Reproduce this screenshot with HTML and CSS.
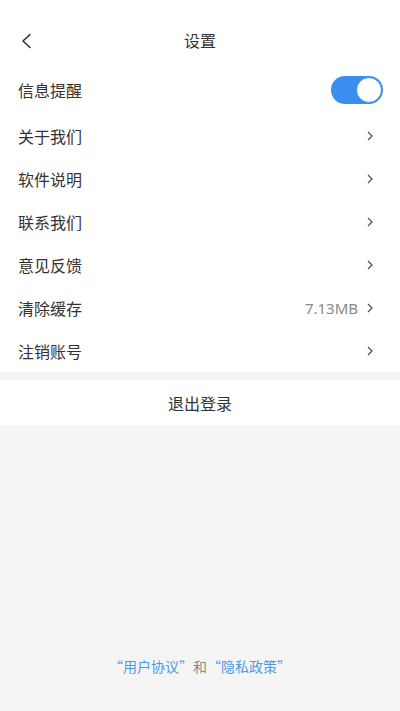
FILE: index.html
```html
<!DOCTYPE html>
<html lang="zh-CN">
<head>
<meta charset="utf-8">
<title>设置</title>
<link rel="stylesheet" href="styles.css">
</head>
<body>
<div class="page">
  <header class="header">
    <svg class="back" width="12" height="16" viewBox="0 0 12 16"><path d="M10 1.5 L3 8 L10 14.5" fill="none" stroke="#333" stroke-width="1.6" stroke-linecap="round" stroke-linejoin="round"/></svg>
    <div class="title">设置</div>
  </header>
  <div class="list">
    <div class="row row-first">
      <span class="label">信息提醒</span>
      <span class="toggle"><span class="knob"></span></span>
    </div>
    <div class="row"><span class="label">关于我们</span><svg class="chev" width="8" height="10" viewBox="0 0 8 10"><path d="M2 1 L6 5 L2 9" fill="none" stroke="#555" stroke-width="1.3"/></svg></div>
    <div class="row"><span class="label">软件说明</span><svg class="chev" width="8" height="10" viewBox="0 0 8 10"><path d="M2 1 L6 5 L2 9" fill="none" stroke="#555" stroke-width="1.3"/></svg></div>
    <div class="row"><span class="label">联系我们</span><svg class="chev" width="8" height="10" viewBox="0 0 8 10"><path d="M2 1 L6 5 L2 9" fill="none" stroke="#555" stroke-width="1.3"/></svg></div>
    <div class="row"><span class="label">意见反馈</span><svg class="chev" width="8" height="10" viewBox="0 0 8 10"><path d="M2 1 L6 5 L2 9" fill="none" stroke="#555" stroke-width="1.3"/></svg></div>
    <div class="row"><span class="label">清除缓存</span><span class="right"><span class="value">7.13MB</span><svg class="chev" width="8" height="10" viewBox="0 0 8 10"><path d="M2 1 L6 5 L2 9" fill="none" stroke="#555" stroke-width="1.3"/></svg></span></div>
    <div class="row"><span class="label">注销账号</span><svg class="chev" width="8" height="10" viewBox="0 0 8 10"><path d="M2 1 L6 5 L2 9" fill="none" stroke="#555" stroke-width="1.3"/></svg></div>
  </div>
  <div class="band"></div>
  <div class="logout">退出登录</div>
  <div class="rest">
    <div class="footer"><span class="link">“用户协议”</span><span class="and">和</span><span class="link">“隐私政策”</span></div>
  </div>
</div>
</body>
</html>
```
FILE: styles.css
```css
html, body {
  margin: 0;
  padding: 0;
  background: #f5f5f5;
}
body {
  font-family: "Noto Sans CJK SC", "Noto Sans", sans-serif;
  color: #333;
}
.page {
  width: 400px;
  height: 711px;
  display: flex;
  flex-direction: column;
  background: #f5f5f5;
}
.header {
  height: 66px;
  box-sizing: border-box;
  padding-top: 14px;
  display: flex;
  align-items: center;
  justify-content: center;
  position: relative;
  background: #fff;
}
.back {
  position: absolute;
  left: 20px;
  top: 33px;
}
.title {
  font-size: 16px;
  color: #333;
}
.list {
  background: #fff;
}
.row {
  height: 43px;
  display: flex;
  align-items: center;
  justify-content: space-between;
  padding: 0 26px 0 18px;
}
.row-first {
  height: 48px;
  padding-right: 17px;
}
.label {
  font-size: 16px;
  color: #333;
}
.right {
  display: flex;
  align-items: center;
  gap: 8px;
}
.value {
  font-family: "Noto Sans", sans-serif;
  font-size: 15px;
  color: #888;
}
.chev {
  display: block;
}
.toggle {
  width: 52px;
  height: 28px;
  border-radius: 14px;
  background: #3a8ef0;
  display: flex;
  align-items: center;
  justify-content: flex-end;
  box-sizing: border-box;
  padding-right: 1px;
}
.knob {
  width: 26px;
  height: 26px;
  border-radius: 50%;
  background: #fff;
  box-sizing: border-box;
  border: 1px solid #3a8ef0;
}
.band {
  height: 8px;
  background: #f5f5f5;
}
.logout {
  height: 45px;
  background: #fff;
  display: flex;
  align-items: center;
  justify-content: center;
  font-size: 16px;
  color: #333;
}
.rest {
  flex: 1;
  display: flex;
  flex-direction: column;
  justify-content: flex-end;
  align-items: center;
  padding-bottom: 35px;
}
.footer {
  font-size: 14px;
}
.link {
  color: #4a9be6;
}
.and {
  color: #888;
}
```
